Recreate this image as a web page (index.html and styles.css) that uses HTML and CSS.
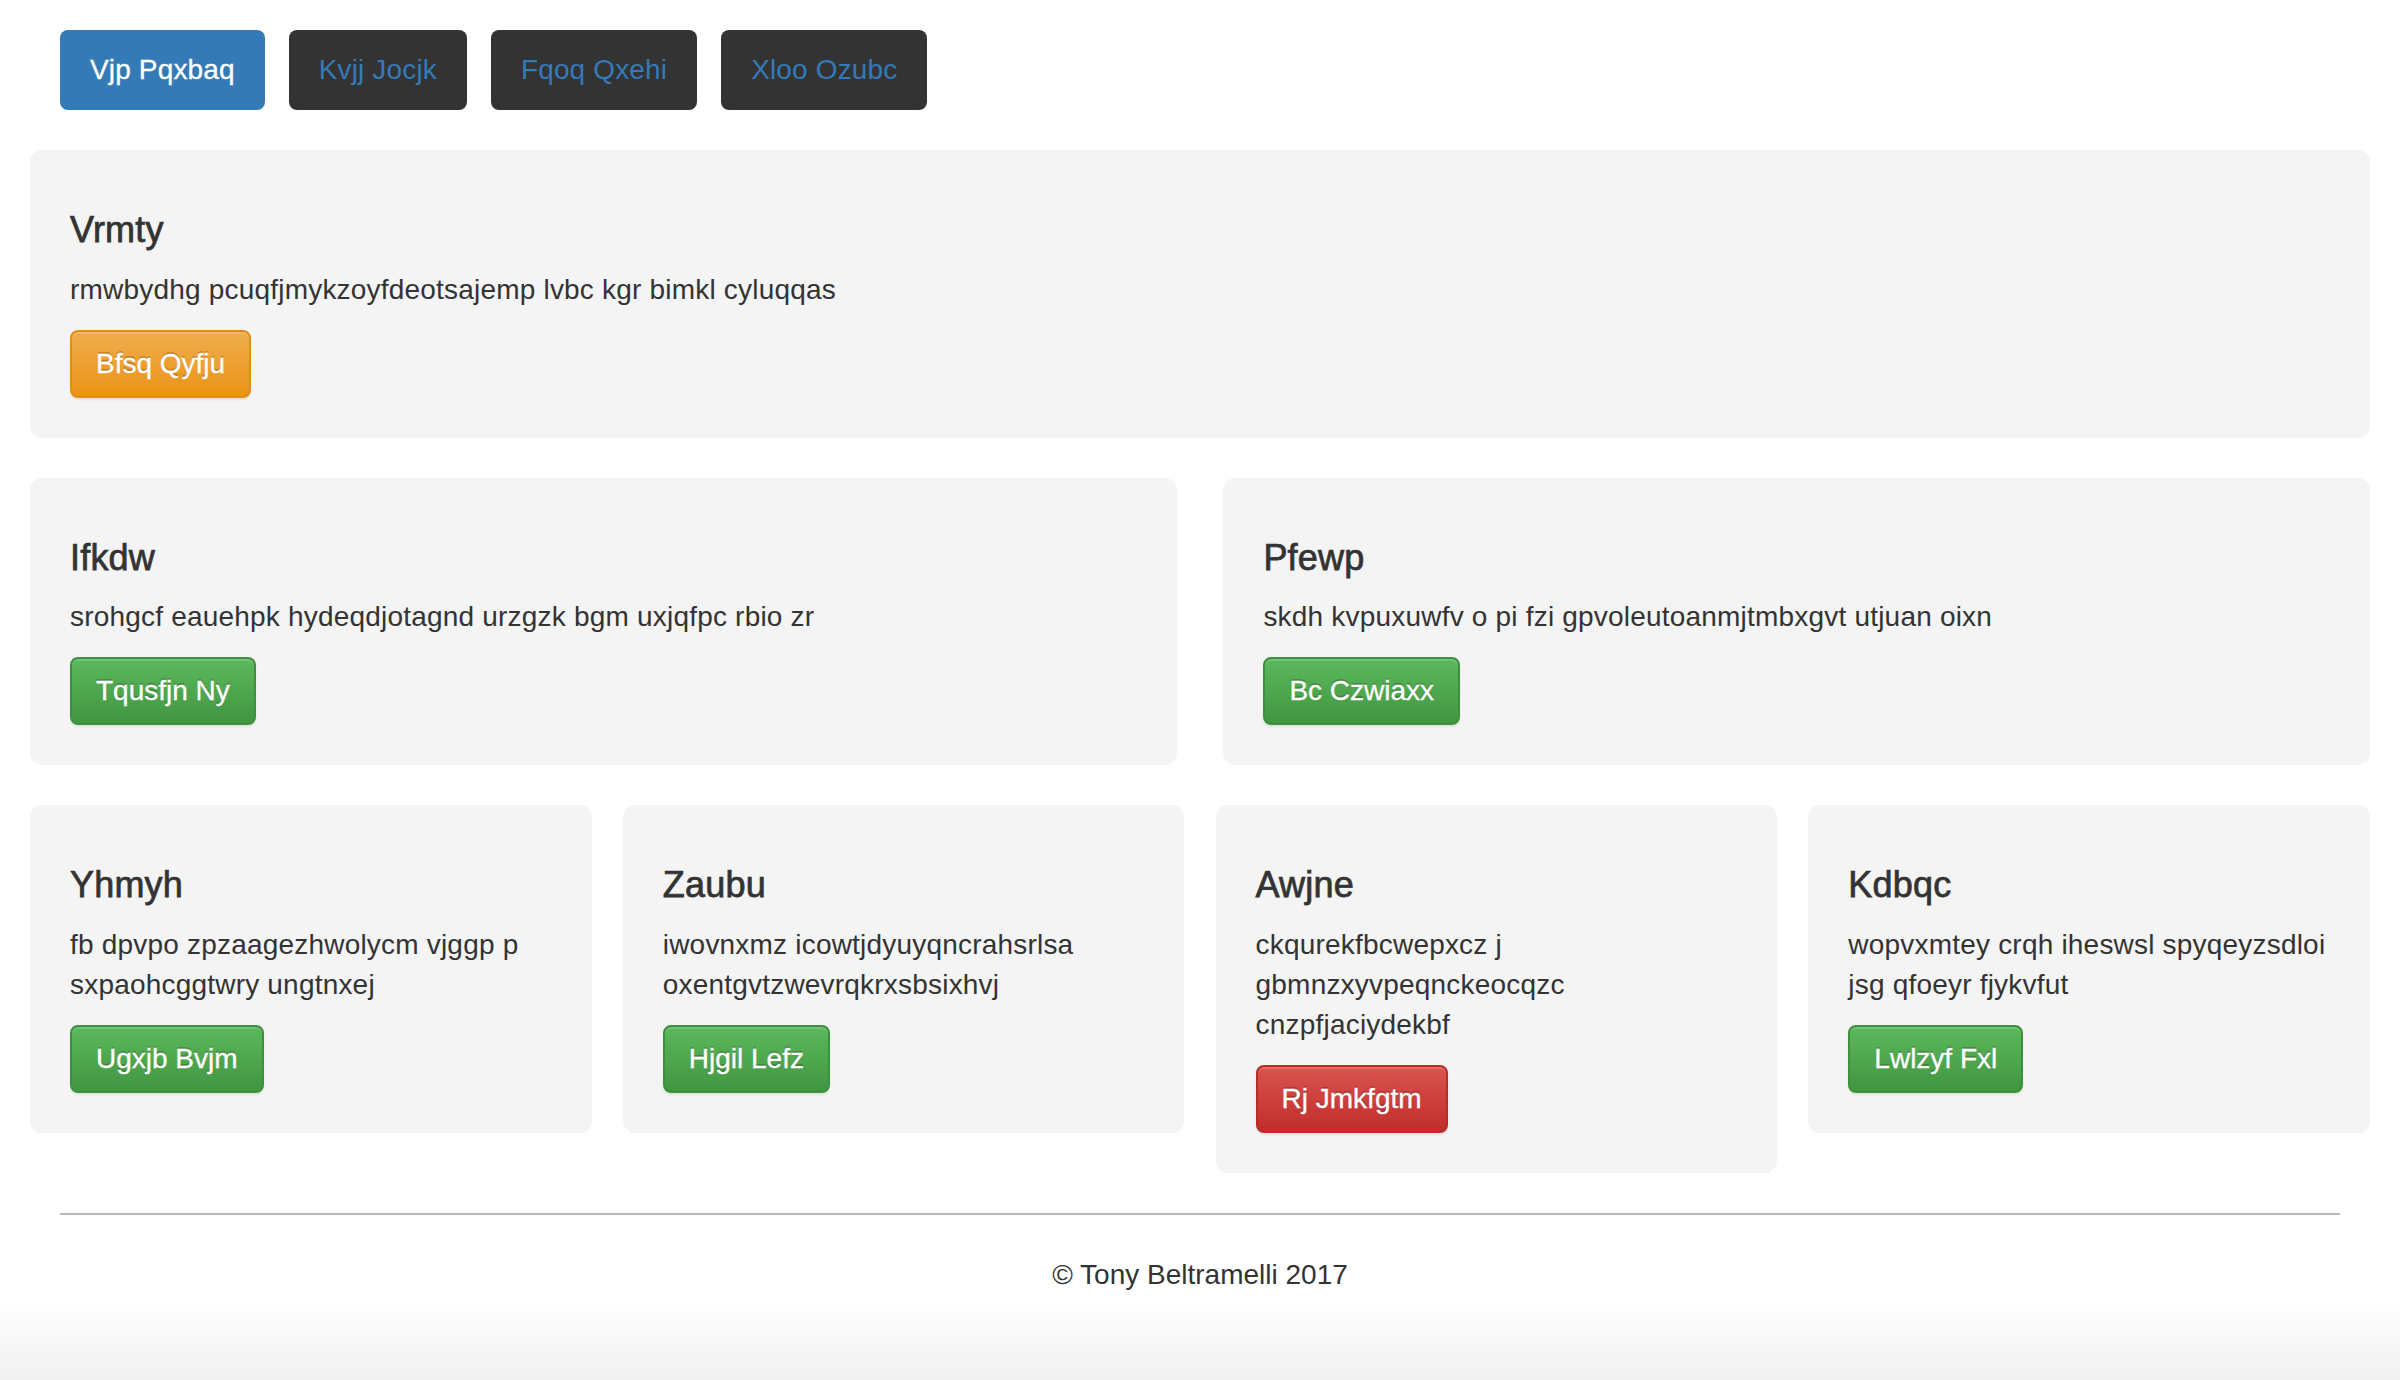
FILE: index.html
```html
<!DOCTYPE html>
<html lang="en">
<head>
<meta charset="utf-8">
<title>pix2code</title>
<link rel="stylesheet" href="styles.css">
</head>
<body>
<div class="container">
  <header class="header">
    <nav>
      <ul class="nav-pills">
        <li class="active"><a href="#">Vjp Pqxbaq</a></li>
        <li><a href="#">Kvjj Jocjk</a></li>
        <li><a href="#">Fqoq Qxehi</a></li>
        <li><a href="#">Xloo Ozubc</a></li>
      </ul>
    </nav>
  </header>

  <div class="row">
    <div class="col col-12">
      <h4>Vrmty</h4>
      <p>rmwbydhg pcuqfjmykzoyfdeotsajemp lvbc kgr bimkl cyluqqas</p>
      <a class="btn btn-warning" href="#">Bfsq Qyfju</a>
    </div>
  </div>

  <div class="row">
    <div class="col col-6">
      <h4>Ifkdw</h4>
      <p>srohgcf eauehpk hydeqdjotagnd urzgzk bgm uxjqfpc rbio zr</p>
      <a class="btn btn-success" href="#">Tqusfjn Ny</a>
    </div>
    <div class="col col-6">
      <h4>Pfewp</h4>
      <p>skdh kvpuxuwfv o pi fzi gpvoleutoanmjtmbxgvt utjuan oixn</p>
      <a class="btn btn-success" href="#">Bc Czwiaxx</a>
    </div>
  </div>

  <div class="row">
    <div class="col col-3">
      <h4>Yhmyh</h4>
      <p>fb dpvpo zpzaagezhwolycm vjggp p sxpaohcggtwry ungtnxej</p>
      <a class="btn btn-success" href="#">Ugxjb Bvjm</a>
    </div>
    <div class="col col-3">
      <h4>Zaubu</h4>
      <p>iwovnxmz icowtjdyuyqncrahsrlsa oxentgvtzwevrqkrxsbsixhvj</p>
      <a class="btn btn-success" href="#">Hjgil Lefz</a>
    </div>
    <div class="col col-3">
      <h4>Awjne</h4>
      <p>ckqurekfbcwepxcz j gbmnzxyvpeqnckeocqzc cnzpfjaciydekbf</p>
      <a class="btn btn-danger" href="#">Rj Jmkfgtm</a>
    </div>
    <div class="col col-3">
      <h4>Kdbqc</h4>
      <p>wopvxmtey crqh iheswsl spyqeyzsdloi jsg qfoeyr fjykvfut</p>
      <a class="btn btn-success" href="#">Lwlzyf Fxl</a>
    </div>
  </div>

  <footer class="footer">
    <p>&copy; Tony Beltramelli 2017</p>
  </footer>
</div>
</body>
</html>
```

FILE: styles.css
```css
* {
  box-sizing: border-box;
}

html {
  min-height: 100%;
  background: linear-gradient(to bottom, #ffffff 0, #ffffff 1298px, #f1f1f1 1380px) no-repeat;
  background-size: 100% 1380px;
}

body {
  margin: 0;
  font-family: "Liberation Sans", Helvetica, Arial, sans-serif;
  font-size: 28px;
  line-height: 40px;
  color: #333333;
}

.container {
  width: 2340px;
  margin: 0 auto;
  padding: 0 30px;
}

.header {
  padding-top: 30px;
  margin-bottom: 40px;
}

.nav-pills {
  list-style: none;
  margin: 0;
  padding: 0;
  display: flex;
  gap: 24px;
}

.nav-pills li {
  background-color: #333333;
  border-radius: 8px;
}

.nav-pills li a {
  display: block;
  padding: 20px 30px;
  color: #337ab7;
  text-decoration: none;
  border-radius: 8px;
  letter-spacing: 0.15px;
}

.nav-pills li.active {
  background-color: #337ab7;
}

.nav-pills li.active a {
  color: #ffffff;
  -webkit-text-stroke: 0.3px #ffffff;
}

.row {
  display: flex;
  align-items: flex-start;
  margin: 0 -30px;
}

.col {
  background-color: #f4f4f4;
  border-radius: 12px;
  padding: 40px;
  margin-bottom: 40px;
}

.col-12 {
  width: 100%;
}

.col-6 {
  width: 49%;
  margin-right: 2%;
}

.col-3 {
  width: 24%;
  margin-right: 1.333333%;
}

.row .col:last-child {
  margin-right: 0;
}

h4 {
  font-size: 36px;
  line-height: 1.1;
  font-weight: 500;
  margin: 20px 0 20px;
  letter-spacing: 0.2px;
  -webkit-text-stroke: 0.75px #333333;
}

.col p {
  margin: 0 0 20px;
  letter-spacing: 0.2px;
}

.btn {
  display: inline-block;
  padding: 12px 24px;
  font-size: 28px;
  line-height: 40px;
  border: 2px solid transparent;
  border-radius: 8px;
  color: #ffffff;
  text-decoration: none;
  -webkit-text-stroke: 0.3px #ffffff;
  text-shadow: 0 -2px 0 rgba(0, 0, 0, 0.2);
  box-shadow: inset 0 2px 0 rgba(255, 255, 255, 0.15), 0 2px 2px rgba(0, 0, 0, 0.075);
}

.btn-warning {
  background-image: linear-gradient(to bottom, #f0ad4e 0, #eb9316 100%);
  border-color: #e38d13;
}

.btn-success {
  background-image: linear-gradient(to bottom, #5cb85c 0, #419641 100%);
  border-color: #3e8f3e;
}

.btn-danger {
  background-image: linear-gradient(to bottom, #d9534f 0, #c12e2a 100%);
  border-color: #b92c28;
}

.footer {
  border-top: 2px solid #b8b8b8;
  padding: 40px 0;
  text-align: center;
}

.footer p {
  margin: 0 0 20px;
}
```
